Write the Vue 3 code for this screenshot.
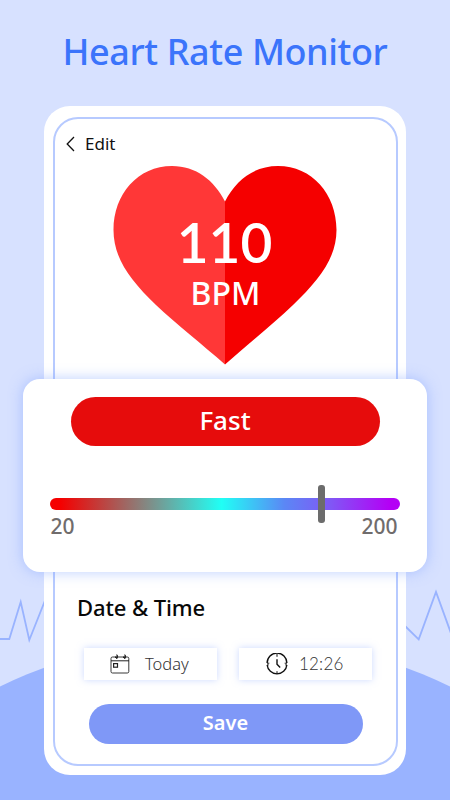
<template>
  <div class="page">
    <!-- pulse line and hill behind the phone -->
    <svg class="backdrop" viewBox="0 0 450 800">
      <circle cx="225" cy="1152" r="517" fill="#99b3ff" />
      <path d="M0 639H9.3L20.7 602L29.3 640L46 598M404 625L418.7 639.3L436 592L452 636" fill="none" stroke="#99b3ff" stroke-width="1.8" />
    </svg>

    <h1 class="title">Heart Rate Monitor</h1>

    <div class="phone">
      <div class="screen">
        <div class="top-bar">
          <svg class="back" viewBox="0 0 9 16"><path d="M8 1L1.2 8L8 15" fill="none" stroke="#111" stroke-width="1.3" /></svg>
          <span>Edit</span>
        </div>

        <div class="heart">
          <svg class="heart-shape" viewBox="0 0 224 199">
            <path d="M112 35.500C101 14 83 0 59 0C25 0 0.500 28 0.500 64C0.500 92 17 114 43 139C63 158 90 179 112 198.500Z" fill="#ff3737" />
            <path d="M112 35.500C123 14 141 0 165 0C199 0 223.500 28 223.500 64C223.500 92 206 114 180 139C160 158 134 179 112 198.500Z" fill="#f50000" />
          </svg>
          <div class="heart-text">
            <div class="bpm-value">{{ bpm }}</div>
            <div class="bpm-unit">BPM</div>
          </div>
        </div>

        <!-- result card, wider than the phone -->
        <div class="result">
          <div class="status">Fast</div>
          <div class="range">
            <div class="thumb"></div>
          </div>
          <div class="limits">
            <span>{{ min }}</span>
            <span>{{ max }}</span>
          </div>
        </div>

        <h2 class="section">Date &amp; Time</h2>
        <div class="fields">
          <div class="field">
            <svg class="cal" viewBox="0 0 20 20" fill="none" stroke="#222">
              <rect x="1" y="3" width="17.800" height="16" rx="1.500" stroke-width=".9" />
              <path d="M1 6.800H19" stroke-width="1" />
              <path d="M5 3.200H7.500M13 3.200H15.500" stroke-width="1.600" />
              <path d="M6 4.500C8 4.500 8 1 6.300 .800M14 4.500C16 4.500 16 1 14.300 .800" stroke-width="1.200" />
              <rect x="3.600" y="9.600" width="3.900" height="3.600" stroke-width="1.200" />
            </svg>
            <span class="day">Today</span>
          </div>
          <div class="field">
            <svg class="clock" viewBox="0 0 22 22" fill="none" stroke="#111" stroke-width="1.400">
              <path d="M1.100 10A9.900 9.900 0 0 1 20.900 10M20.850 12A9.900 9.900 0 0 1 1.150 12" />
              <path d="M11 1V3.800M11 18.200V21M1 10.200H3.300M18.700 10.200H21M1 11.900H2.800M19.200 11.900H21" stroke-width="1" />
              <path d="M11 6.200V11.200L14.200 14.500" />
            </svg>
            <span class="time">12:26</span>
          </div>
        </div>
        <button class="save">Save</button>
      </div>
    </div>
  </div>
</template>

<script setup>
import { ref } from 'vue'

const bpm = ref(110)
const min = 20
const max = 200
</script>

<style>
body { margin: 0; }
</style>

<style scoped>
.page { position: relative; width: 450px; height: 800px; overflow: hidden; background: #d7e1ff; font-family: "Noto Sans", "Open Sans", sans-serif; box-sizing: border-box; }
.backdrop { position: absolute; left: 0; top: 0; width: 450px; height: 800px; }
.title { position: relative; margin: 0; padding-top: 27px; height: 79px; line-height: 50px; text-align: center; font-size: 36px; font-weight: 500; letter-spacing: -.4px; color: #3b74fb; white-space: nowrap; }
.phone { position: relative; width: 362px; height: 669px; margin: 0 auto; padding: 11px 8px 9px 9px; box-sizing: border-box; background: #fff; border-radius: 26px; }
.screen { height: 649px; box-sizing: border-box; border: 2px solid #b7caff; border-radius: 25px; display: flex; flex-direction: column; align-items: center; }

.top-bar { align-self: flex-start; display: flex; align-items: center; gap: 10px; height: 24px; margin: 13px 0 0 11px; font-size: 17px; line-height: 24px; color: #111; }
.back { width: 9px; height: 16px; }

.heart { display: grid; width: 224px; height: 199px; margin: 10px 2px 0 0; }
.heart-shape { grid-area: 1 / 1; width: 224px; height: 199px; }
.heart-text { grid-area: 1 / 1; display: flex; flex-direction: column; align-items: center; padding-top: 46px; color: #fff; z-index: 1; }
.bpm-value { font-family: "Lato", sans-serif; font-size: 55px; line-height: 60px; font-weight: 600; }
.bpm-unit { padding-left: 2px; font-size: 32px; line-height: 42px; font-weight: 500; }

.result { flex: none; width: 404px; height: 193px; margin: 14px -31px 0 -33px; box-sizing: border-box; padding: 18px 27px 0; background: #fff; border-radius: 17px; box-shadow: 0 0 14px rgba(122, 158, 255, .5); z-index: 1; }
.status { width: 309px; height: 49px; margin: 0 0 0 21px; border-radius: 25px; background: #e60c0c; color: #fff; text-align: center; font-size: 26px; line-height: 46px; font-weight: 500; }
.range { display: flex; align-items: center; height: 12px; margin-top: 52px; border-radius: 6px; background: linear-gradient(90deg, #f50000 3%, #20fff5 49%, #5b87f5 67%, #8058f5 80%, #b400f5 97%); }
.thumb { width: 7px; height: 38px; margin-left: 268.500px; border-radius: 3px; background: #6c6c6c; }
.limits { display: flex; justify-content: space-between; padding: 2px 2px 0 1px; font-size: 21px; line-height: 28px; color: #706c6c; font-weight: 500; }

.section { align-self: flex-start; margin: 20px 0 0 22px; font-size: 22px; line-height: 30px; font-weight: 500; letter-spacing: -.1px; color: #080808; white-space: nowrap; }
.fields { display: flex; gap: 22px; margin-top: 26px; margin-left: 5px; }
.field { display: flex; align-items: center; width: 133px; height: 32px; background: #fff; box-shadow: 0 0 7px rgba(153, 179, 255, .5); color: #333; font-weight: 300; }
.cal { width: 20px; height: 20px; margin-left: 26px; }
.clock { width: 22px; height: 22px; margin-left: 27px; }
.day { margin-left: 15px; font-size: 16.500px; line-height: 24px; }
.time { margin-left: 11px; font-family: "Lato", sans-serif; font-size: 17px; line-height: 24px; font-weight: 300; letter-spacing: .2px; }
.save { width: 274px; height: 40px; margin-top: 24px; border: none; border-radius: 20px; padding: 0 0 2px; background: #7f98f7; color: #fff; font-family: inherit; font-size: 20px; line-height: 38px; font-weight: 600; }
</style>
